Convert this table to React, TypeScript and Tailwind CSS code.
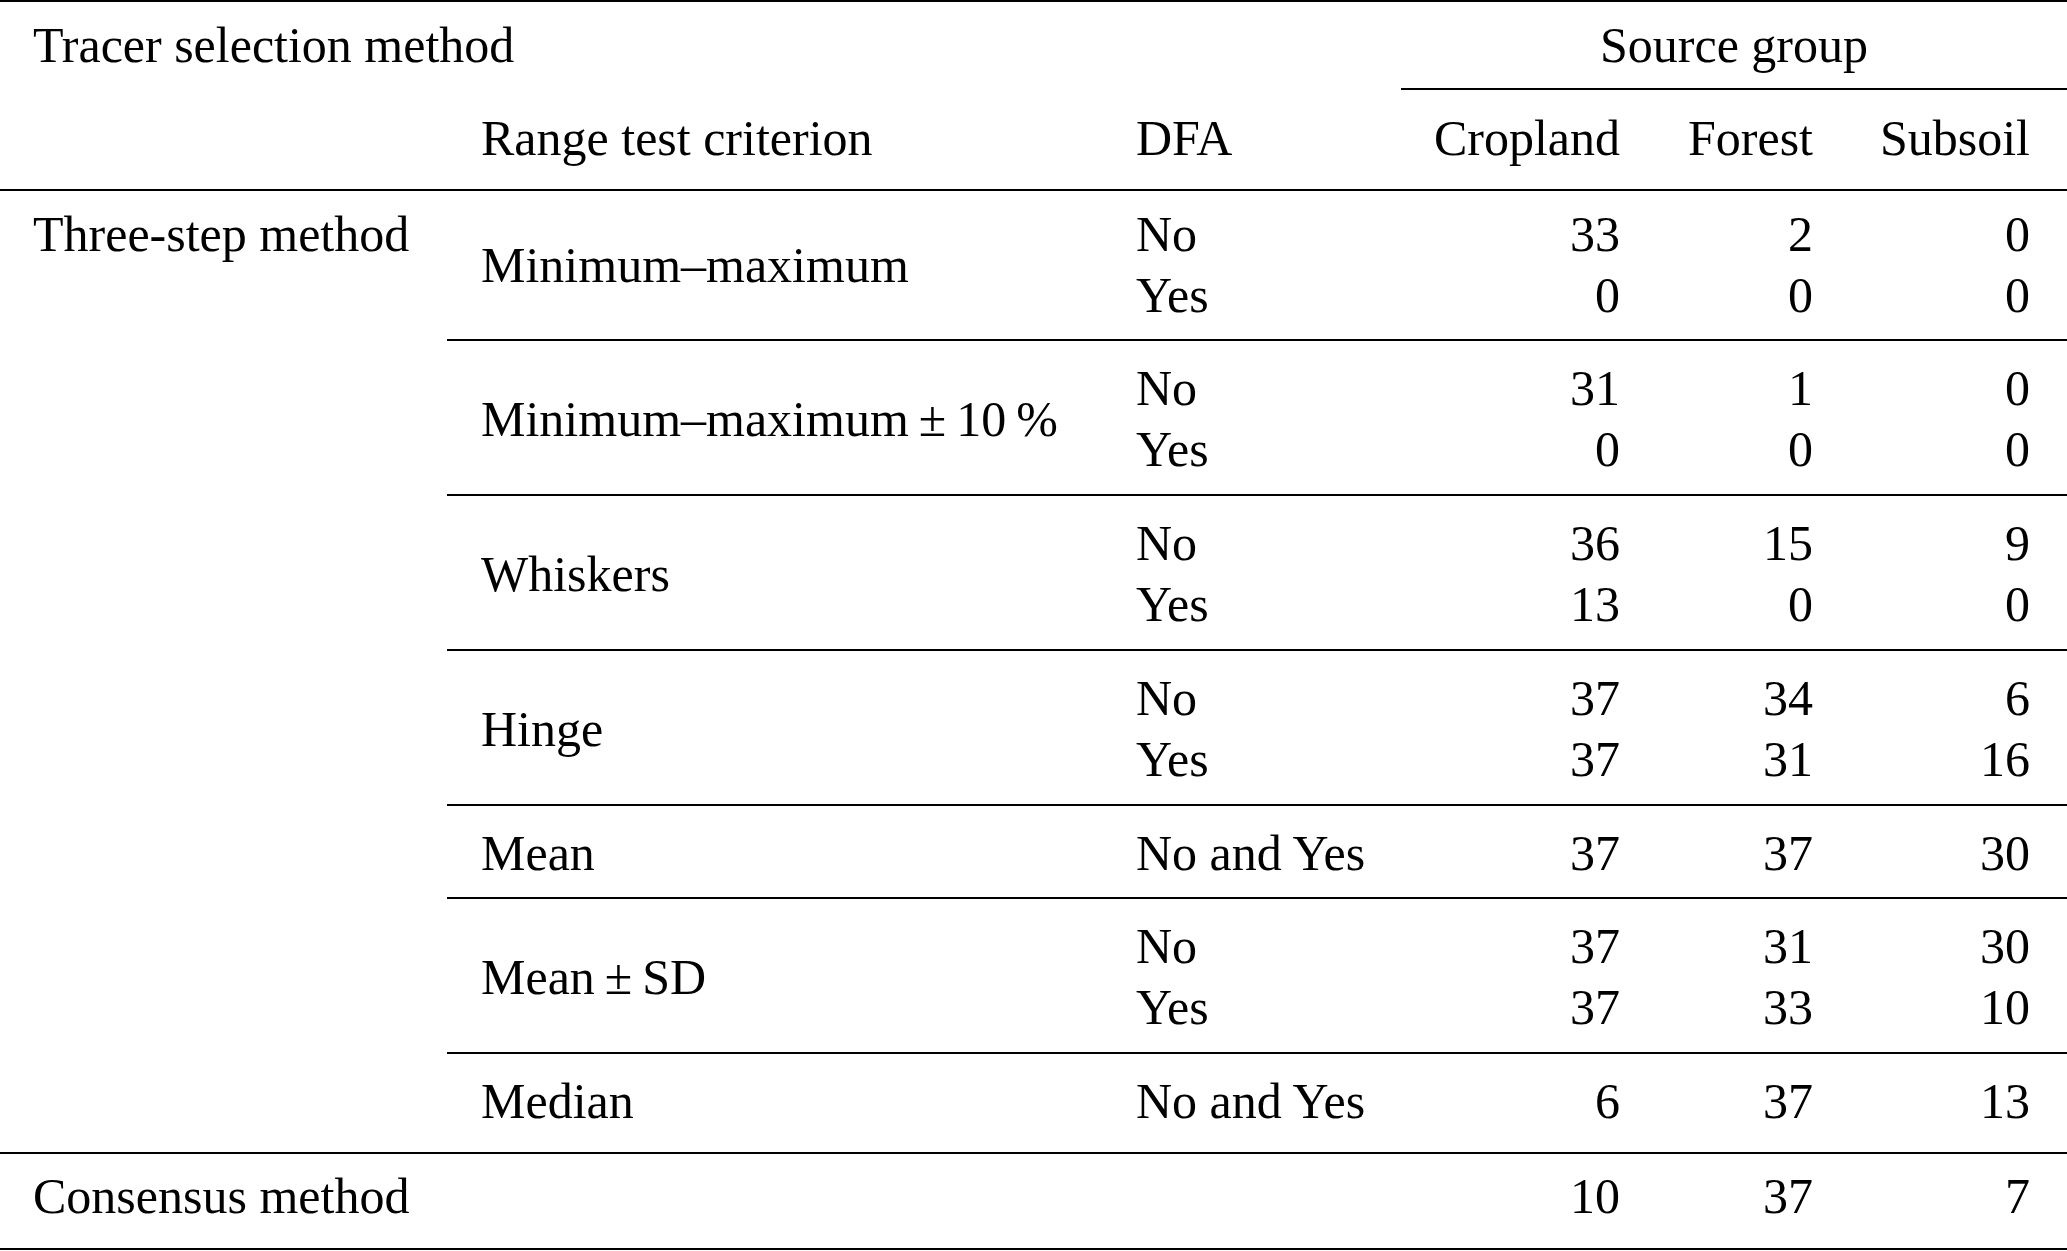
import React from 'react';

type Row = [string, number, number, number];

const groups: { label: string; rows: Row[] }[] = [
  { label: 'Minimum–maximum', rows: [['No', 33, 2, 0], ['Yes', 0, 0, 0]] },
  { label: 'Minimum–maximum\u2009±\u200910\u2009%', rows: [['No', 31, 1, 0], ['Yes', 0, 0, 0]] },
  { label: 'Whiskers', rows: [['No', 36, 15, 9], ['Yes', 13, 0, 0]] },
  { label: 'Hinge', rows: [['No', 37, 34, 6], ['Yes', 37, 31, 16]] },
  { label: 'Mean', rows: [['No and Yes', 37, 37, 30]] },
  { label: 'Mean\u2009±\u2009SD', rows: [['No', 37, 31, 30], ['Yes', 37, 33, 10]] },
  { label: 'Median', rows: [['No and Yes', 6, 37, 13]] },
];

const NumCells: React.FC<{ a: React.ReactNode; b: React.ReactNode; c: React.ReactNode }> = ({ a, b, c }) => (
  <>
    <div className="w-[253px] text-right pr-[34px]">{a}</div>
    <div className="w-[193px] text-right pr-[34px]">{b}</div>
    <div className="w-[220px] text-right pr-[37px]">{c}</div>
  </>
);

export default function App() {
  return (
    <div className="w-[2067px] bg-white text-black font-['Liberation_Serif',serif] text-[50px] leading-[61px]">
      {/* header */}
      <div className="border-t-2 border-b-2 border-black">
        <div className="flex">
          <div className="w-[1401px] pl-[33px] pt-[13px]">Tracer selection method</div>
          <div className="w-[666px] pt-[13px] pb-[12px] text-center border-b-2 border-black">Source group</div>
        </div>
        <div className="flex pt-[18px] pb-[20px]">
          <div className="w-[447px]"></div>
          <div className="w-[655px] pl-[34px]">Range test criterion</div>
          <div className="w-[299px] pl-[34px]">DFA</div>
          <NumCells a="Cropland" b="Forest" c="Subsoil" />
        </div>
      </div>

      {/* three-step method */}
      <div className="flex">
        <div className="w-[447px] pl-[33px] pt-[13px]">Three-step method</div>
        <div className="flex flex-col">
          {groups.map((g, i) => (
            <div
              key={i}
              className={`flex ${i === 0 ? 'pt-[13px] pb-[13px]' : 'pt-[17px] border-t-2 border-black'} ${
                i === groups.length - 1 ? 'pb-[20px]' : i === 0 ? '' : g.rows.length === 1 ? 'pb-[13px]' : 'pb-[14px]'
              }`}
            >
              <div className="w-[655px] pl-[34px] flex items-center whitespace-nowrap">{g.label}</div>
              <div className="flex flex-col">
                {g.rows.map((r, j) => (
                  <div key={j} className="flex h-[61px]">
                    <div className="w-[299px] pl-[34px] whitespace-nowrap">{r[0]}</div>
                    <NumCells a={r[1]} b={r[2]} c={r[3]} />
                  </div>
                ))}
              </div>
            </div>
          ))}
        </div>
      </div>

      {/* consensus */}
      <div className="flex border-t-2 border-b-2 border-black pt-[12px] pb-[21px]">
        <div className="w-[1401px] pl-[33px]">Consensus method</div>
        <NumCells a={10} b={37} c={7} />
      </div>
    </div>
  );
}
